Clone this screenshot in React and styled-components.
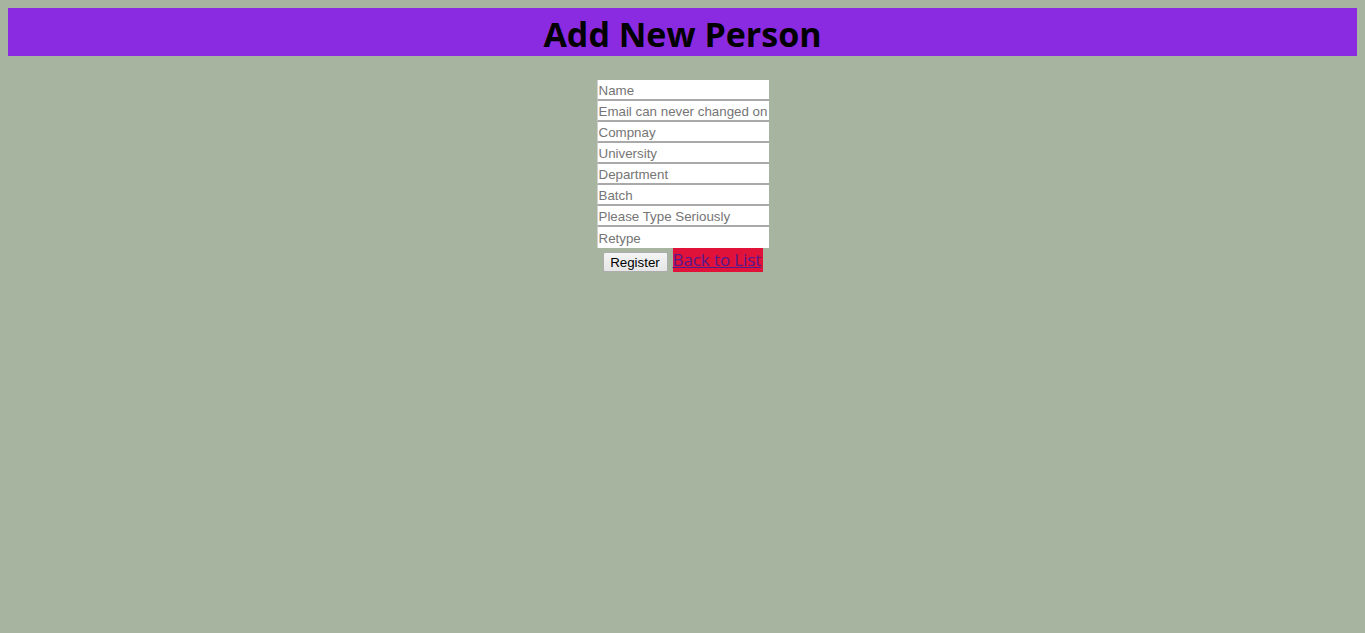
import React from "react";
import styled, { createGlobalStyle } from "styled-components";

const Global = createGlobalStyle`
  html, body {
    background: #a7b5a0;
  }
  body {
    margin: 8px;
    font-family: "Open Sans", "Liberation Sans", sans-serif;
  }
`;

/* Header */
const Header = styled.div`
  background: #8a2be2;
  height: 48px;
  display: flex;
  align-items: center;
  justify-content: center;
`;

const Title = styled.h1`
  margin: 0;
  padding-top: 3px;
  font-size: 34px;
  font-weight: 700;
  color: #000;
`;

/* Form */
const Form = styled.form`
  margin-top: 24px;
  display: flex;
  flex-direction: column;
  align-items: center;
`;

const Input = styled.input`
  box-sizing: border-box;
  width: 172px;
  height: 21px;
  margin: 0;
  padding: 1px 1px 0;
  border: none;
  border-bottom: 2px solid #a9a9a9;
  border-left: 1px solid #d0d0d0;
  background: #fff;
  font-family: "Liberation Sans", Arial, sans-serif;
  font-size: 13.33px;
  outline: none;

  &:last-of-type {
    border-bottom: none;
  }

  &::placeholder {
    color: #757575;
  }
`;

const Actions = styled.div`
  display: flex;
  align-items: flex-end;
  gap: 5px;
  height: 24px;
`;

const Button = styled.button`
  box-sizing: border-box;
  width: 65px;
  height: 20px;
  padding: 0;
  border: 1px solid #adadad;
  border-radius: 2px;
  background: linear-gradient(#f4f4f4, #e6e6e6);
  font-family: "Liberation Sans", Arial, sans-serif;
  font-size: 13.33px;
  color: #000;
`;

const BackLink = styled.a`
  display: block;
  box-sizing: border-box;
  width: 90px;
  height: 24px;
  line-height: 24px;
  background: #e0123a;
  color: #551a8b;
  font-family: "Open Sans", sans-serif;
  font-size: 17px;
  text-decoration: underline;
  white-space: nowrap;
  letter-spacing: -0.1px;
`;

const fields = [
  "Name",
  "Email can never changed on",
  "Compnay",
  "University",
  "Department",
  "Batch",
  "Please Type Seriously",
  "Retype",
];

export default function App() {
  return (
    <>
      <Global />
      <Header>
        <Title>Add New Person</Title>
      </Header>
      <Form onSubmit={(e) => e.preventDefault()}>
        {fields.map((f) => (
          <Input key={f} placeholder={f} />
        ))}
        <Actions>
          <Button type="submit">Register</Button>
          <BackLink href="#">Back to List</BackLink>
        </Actions>
      </Form>
    </>
  );
}
